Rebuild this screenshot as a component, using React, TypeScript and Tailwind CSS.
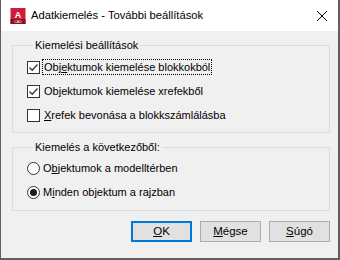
import React from 'react';

const font = { fontFamily: '"Liberation Sans", Arial, sans-serif' };

function CheckRow({ checked, focus, children }: any) {
  return (
    <div className="flex items-center h-[16px]">
      <span className="w-[13px] h-[13px] border border-[#333333] bg-white flex items-center justify-center shrink-0">
        {checked && (
          <svg width="11" height="11" viewBox="0 0 11 11">
            <path d="M1.5 5.5 L4.2 8.2 L9.5 2.5" fill="none" stroke="#333333" strokeWidth="1.3" />
          </svg>
        )}
      </span>
      <span
        className={
          'ml-[2px] px-[1px] leading-[14px] border border-dotted ' +
          (focus ? 'border-black' : 'border-transparent')
        }
      >
        {children}
      </span>
    </div>
  );
}

function RadioRow({ selected, children }: any) {
  return (
    <div className="flex items-center h-[16px]">
      <span className="w-[13px] h-[13px] rounded-full border border-[#333333] bg-white flex items-center justify-center shrink-0">
        {selected && <span className="w-[7px] h-[7px] rounded-full bg-[#1a1a1a]" />}
      </span>
      <span className="ml-[3px] leading-[14px]">{children}</span>
    </div>
  );
}

function Btn({ def, children }: any) {
  return (
    <button
      className={
        'w-[61px] h-[21px] bg-[#e1e1e1] text-black text-[11.5px] leading-none flex items-center justify-center ' +
        (def ? 'border-2 border-[#0078d7]' : 'border border-[#adadad]')
      }
    >
      {children}
    </button>
  );
}

export default function App() {
  return (
    <div className="w-[340px] h-[260px] text-[11px] text-black" style={font}>
      <div className="flex flex-col w-[340px] h-[260px] border-l border-r-2 border-b-2 border-[#5f5f5f] bg-[#f0f0f0]">
        {/* title bar */}
        <div className="h-[31px] bg-white flex items-center shrink-0">
          <svg className="ml-[9px]" width="16" height="16" viewBox="0 0 16 16">
            <rect x="0.5" y="0" width="15" height="16" fill="#d21a3b" />
            <rect x="0.5" y="11" width="15" height="5" fill="#8e0f25" />
            <text x="8" y="9.5" fontSize="9" fontWeight="700" fill="#ffffff" textAnchor="middle" fontFamily="Liberation Sans, sans-serif">A</text>
            <text x="8" y="15" fontSize="3.5" fill="#ffffff" textAnchor="middle" fontFamily="Liberation Sans, sans-serif">CAD</text>
          </svg>
          <span className="ml-[5px] text-[11.2px]">Adatkiemelés - További beállítások</span>
          <svg className="ml-auto mr-[11px]" width="10" height="10" viewBox="0 0 10 10">
            <path d="M0 0 L10 10 M10 0 L0 10" stroke="#000" strokeWidth="1" />
          </svg>
        </div>

        {/* group 1 */}
        <fieldset className="ml-[11px] mt-[6px] w-[318px] border border-[#dcdcdc] pl-[14px] pt-[6px] pb-[9px] flex flex-col gap-[8px]">
          <legend className="ml-[6px] px-[2px] leading-[16px]">Kiemelési beállítások</legend>
          <CheckRow checked focus>
            Obj<u>e</u>ktumok kiemelése blokkokból
          </CheckRow>
          <CheckRow checked>
            Ob<u>j</u>ektumok kiemelése xrefekből
          </CheckRow>
          <CheckRow>
            <u>X</u>refek bevonása a blokkszámlálásba
          </CheckRow>
        </fieldset>

        {/* group 2 */}
        <fieldset className="ml-[11px] mt-[6px] w-[318px] border border-[#dcdcdc] pl-[14px] pt-[5px] pb-[10px] flex flex-col gap-[8px]">
          <legend className="ml-[6px] px-[2px] leading-[16px]">Kiemelés a következőből:</legend>
          <RadioRow>
            O<u>b</u>jektumok a modelltérben
          </RadioRow>
          <RadioRow selected>
            M<u>i</u>nden objektum a rajzban
          </RadioRow>
        </fieldset>

        {/* buttons */}
        <div className="flex justify-end gap-[8px] mt-[10px] mr-[8px]">
          <Btn def>
            <u>O</u>K
          </Btn>
          <Btn>
            <u>M</u>égse
          </Btn>
          <Btn>
            <u>S</u>úgó
          </Btn>
        </div>
      </div>
    </div>
  );
}
